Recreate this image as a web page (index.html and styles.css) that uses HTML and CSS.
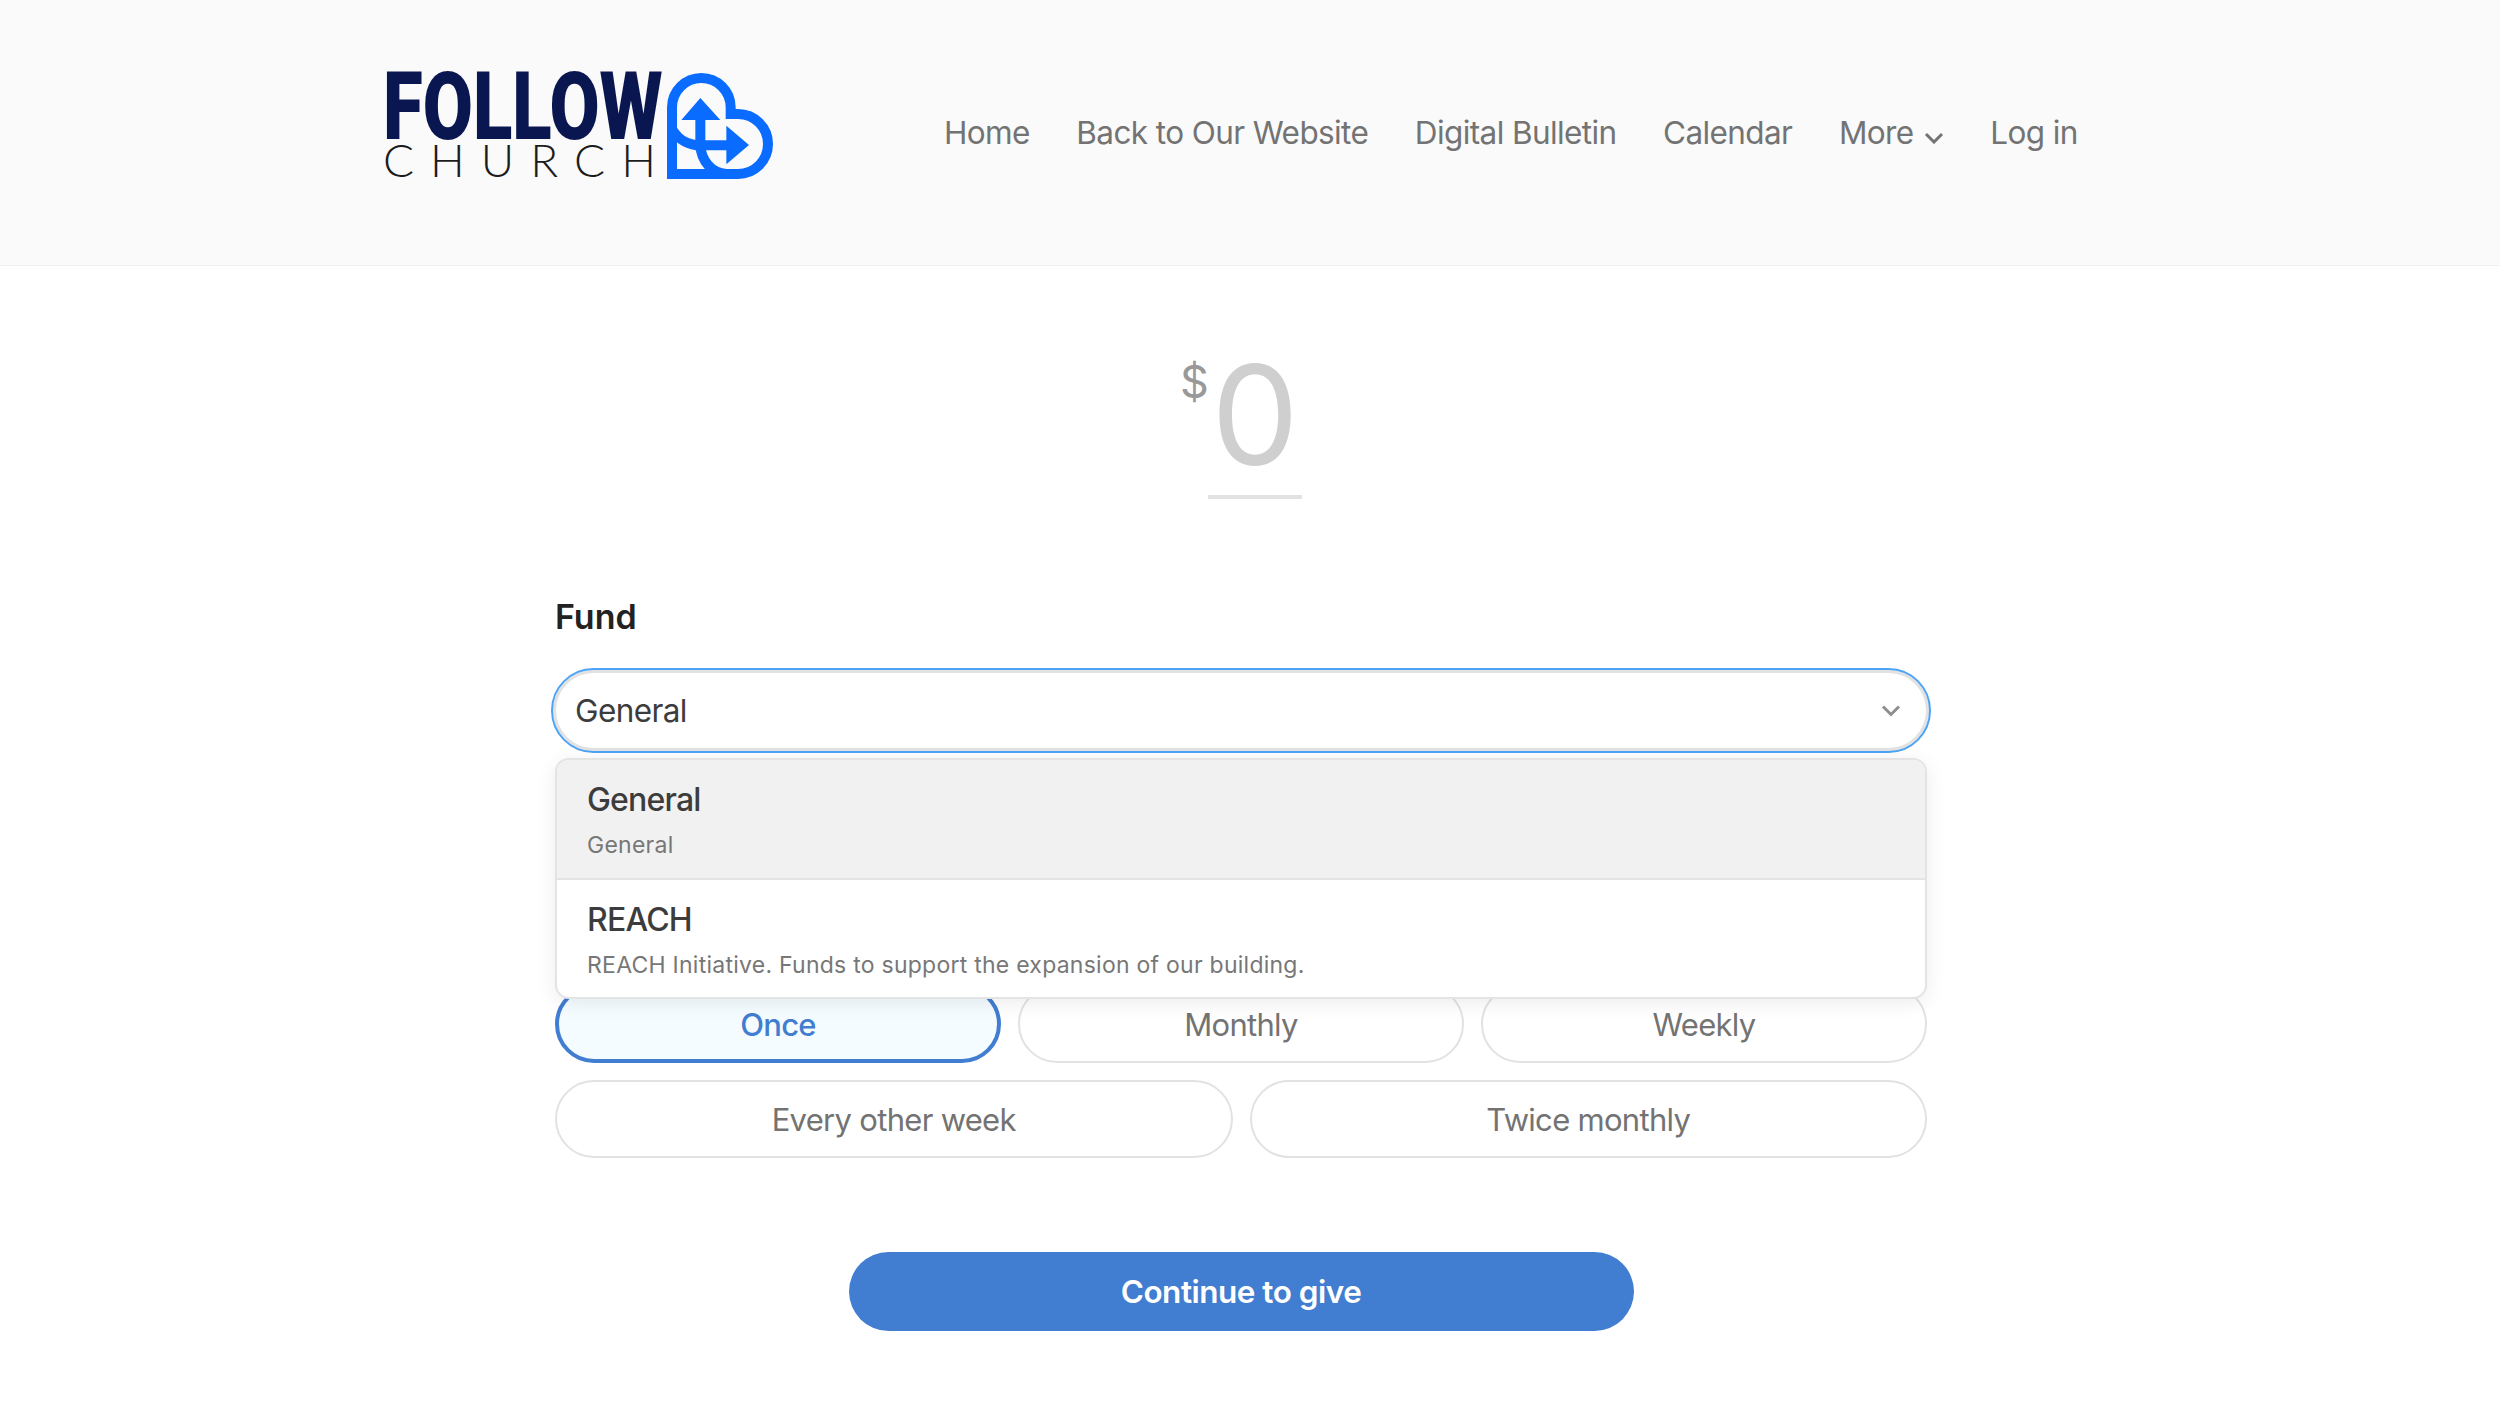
FILE: index.html
```html
<!DOCTYPE html>

<html lang="en">

<head>
    <title>Give</title>
    <meta charset="utf-8">
    <meta name="viewport" content="width=device-width, initial-scale=1.0">
    <link rel="stylesheet" href="styles.css">
</head>

<body>
    <header class="site-header">
        <a class="logo" href="#">
            <span class="logo-words">
                <span class="logo-follow">FOLLOW</span>
                <span class="logo-church">CHURCH</span>
            </span>
            <svg class="logo-mark" viewBox="22 22 318 318" width="106" height="106">
                <path fill="none" stroke="#0a6cff" stroke-width="30" d="M37 325V125a88 88 0 0 1 176 0v20h22a90 90 0 0 1 0 180Z"/>
                <path fill="none" stroke="#0a6cff" stroke-width="30" d="M40 195c20 30 45 43 85 45"/>
                <path fill="none" stroke="#0a6cff" stroke-width="30" d="M122 240c3 45 33 82 78 85"/>
                <path fill="#0a6cff" d="M122 97l60 66h-45v61h63v-44l68 58-68 58v-42h-93v-91h-42z"/>
            </svg>
        </a>
        <nav class="site-nav">
            <a href="#">Home</a>
            <a href="#">Back to Our Website</a>
            <a href="#">Digital Bulletin</a>
            <a href="#">Calendar</a>
            <a href="#" class="more">More
                <svg viewBox="0 0 20 12" width="20" height="12"><path d="M2 2l8 8 8-8" fill="none" stroke="#737373" stroke-width="3"/></svg>
            </a>
            <a href="#">Log in</a>
        </nav>
    </header>

    <main class="give">
        <div class="amount">
            <span class="currency">$</span>
            <span class="value">0</span>
        </div>

        <h2 class="fund-label">Fund</h2>

        <div class="fund-select">
            <div class="select-box">
                <span>General</span>
                <svg viewBox="0 0 20 14" width="20" height="14"><path d="M2 2.5l8 8 8-8" fill="none" stroke="#8f8f8f" stroke-width="3"/></svg>
            </div>
            <ul class="select-menu">
                <li class="active">
                    <strong>General</strong>
                    <small>General</small>
                </li>
                <li>
                    <strong>REACH</strong>
                    <small>REACH Initiative. Funds to support the expansion of our building.</small>
                </li>
            </ul>
        </div>

        <div class="freq-row three">
            <button class="pill selected">Once</button>
            <button class="pill">Monthly</button>
            <button class="pill">Weekly</button>
        </div>
        <div class="freq-row two">
            <button class="pill">Every other week</button>
            <button class="pill">Twice monthly</button>
        </div>

        <button class="continue">Continue to give</button>
    </main>
</body>

</html>
```

FILE: styles.css
```css
html,
body {
    background-color: white;
    color: #737373;
}

body {
    margin: 0;
    padding: 0;
    font-family: Inter, "Liberation Sans", sans-serif;
    font-size: 31.5px;
    letter-spacing: -0.6px;
    height: 1406px;
    overflow: hidden;
}

a {
    color: inherit;
    text-decoration: none;
}

.site-header {
    height: 265px;
    box-sizing: content-box;
    background-color: #fafafa;
    border-bottom: 1px solid #f0f0f0;
    display: flex;
    align-items: center;
    padding-left: 383px;
}

.logo {
    display: flex;
    width: 561px;
    margin-bottom: 13px;
}

.logo-words {
    display: flex;
    flex-direction: column;
    width: 284px;
}

.logo-follow {
    margin-top: 1px;
    font-family: Roboto, "Liberation Sans", sans-serif;
    font-weight: 900;
    font-size: 94px;
    line-height: 66px;
    letter-spacing: 0;
    color: #0a1650;
    transform: scaleX(0.773);
    transform-origin: left;
    white-space: nowrap;
}

.logo-church {
    font-family: Lato, sans-serif;
    font-weight: 300;
    font-size: 46px;
    line-height: 40px;
    letter-spacing: 16px;
    color: #1c1c1c;
}

.site-nav {
    display: flex;
    align-items: center;
    gap: 46.5px;
    margin-top: -1px;
}

.more svg {
    margin-left: 2px;
}

.give {
    width: 1372px;
    margin-left: 555px;
}

.amount {
    width: 1400px;
    height: 233px;
    display: flex;
    justify-content: center;
    position: relative;
}

.currency {
    position: absolute;
    left: 625px;
    top: 88px;
    font-size: 45px;
    color: #999;
}

.value {
    margin-top: 90px;
    width: 94px;
    height: 118px;
    padding-bottom: 21px;
    font-size: 139px;
    line-height: 118px;
    letter-spacing: 0;
    color: #cfcfcf;
    text-align: center;
    border-bottom: 4px solid #e2e2e2;
}

.fund-label {
    margin: 0;
    font-size: 34px;
    font-weight: 600;
    line-height: 40px;
    letter-spacing: 0;
    color: #222;
    padding-top: 98px;
}

.fund-select {
    position: relative;
    margin-top: 31px;
    height: 317px;
}

.select-box {
    margin: 0 -4px;
    height: 85px;
    box-sizing: border-box;
    border: 2px solid #4da3f5;
    box-shadow: inset 0 0 0 3px #e2e2e2;
    border-radius: 43px;
    display: flex;
    justify-content: space-between;
    align-items: center;
    padding: 0 28px 0 22px;
    color: #3c3c3c;
}

.select-menu {
    list-style: none;
    margin: 0;
    padding: 0;
    position: absolute;
    left: 0;
    right: 0;
    top: 90px;
    background-color: white;
    border: 2px solid #e4e4e4;
    border-radius: 14px;
    box-shadow: 0 4px 20px rgba(0, 0, 0, 0.08);
    overflow: hidden;
    z-index: 2;
}

.select-menu li {
    height: 118px;
    box-sizing: border-box;
    padding: 20px 30px 0;
    display: flex;
    flex-direction: column;
    gap: 10px;
}

.select-menu li + li {
    height: 119px;
    border-top: 2px solid #e4e4e4;
}

.select-menu .active {
    background-color: #f1f1f1;
}

.select-menu strong {
    font-weight: 500;
    font-size: 32px;
    line-height: 40px;
    letter-spacing: -0.8px;
    color: #3c3c3c;
}

.select-menu small {
    font-size: 23px;
    line-height: 30px;
    letter-spacing: 0.25px;
    color: #777;
}

.freq-row {
    display: grid;
    gap: 17px;
    margin-bottom: 17px;
}

.freq-row.three {
    grid-template-columns: repeat(3, 1fr);
}

.freq-row.two {
    grid-template-columns: repeat(2, 1fr);
}

.pill {
    height: 78px;
    background-color: white;
    border: 2px solid #e2e2e2;
    border-radius: 39px;
    font: inherit;
    font-size: 31px;
    letter-spacing: -0.7px;
    color: #737373;
}

.pill.selected {
    background-color: #f5fcff;
    border: 4px solid #417dd0;
    color: #417dd0;
    font-weight: 500;
}

.continue {
    display: block;
    margin: 94px auto 0;
    width: 785px;
    height: 79px;
    border: none;
    border-radius: 40px;
    background-color: #417dd0;
    color: white;
    font: inherit;
    font-weight: 600;
    letter-spacing: -0.5px;
}
```
